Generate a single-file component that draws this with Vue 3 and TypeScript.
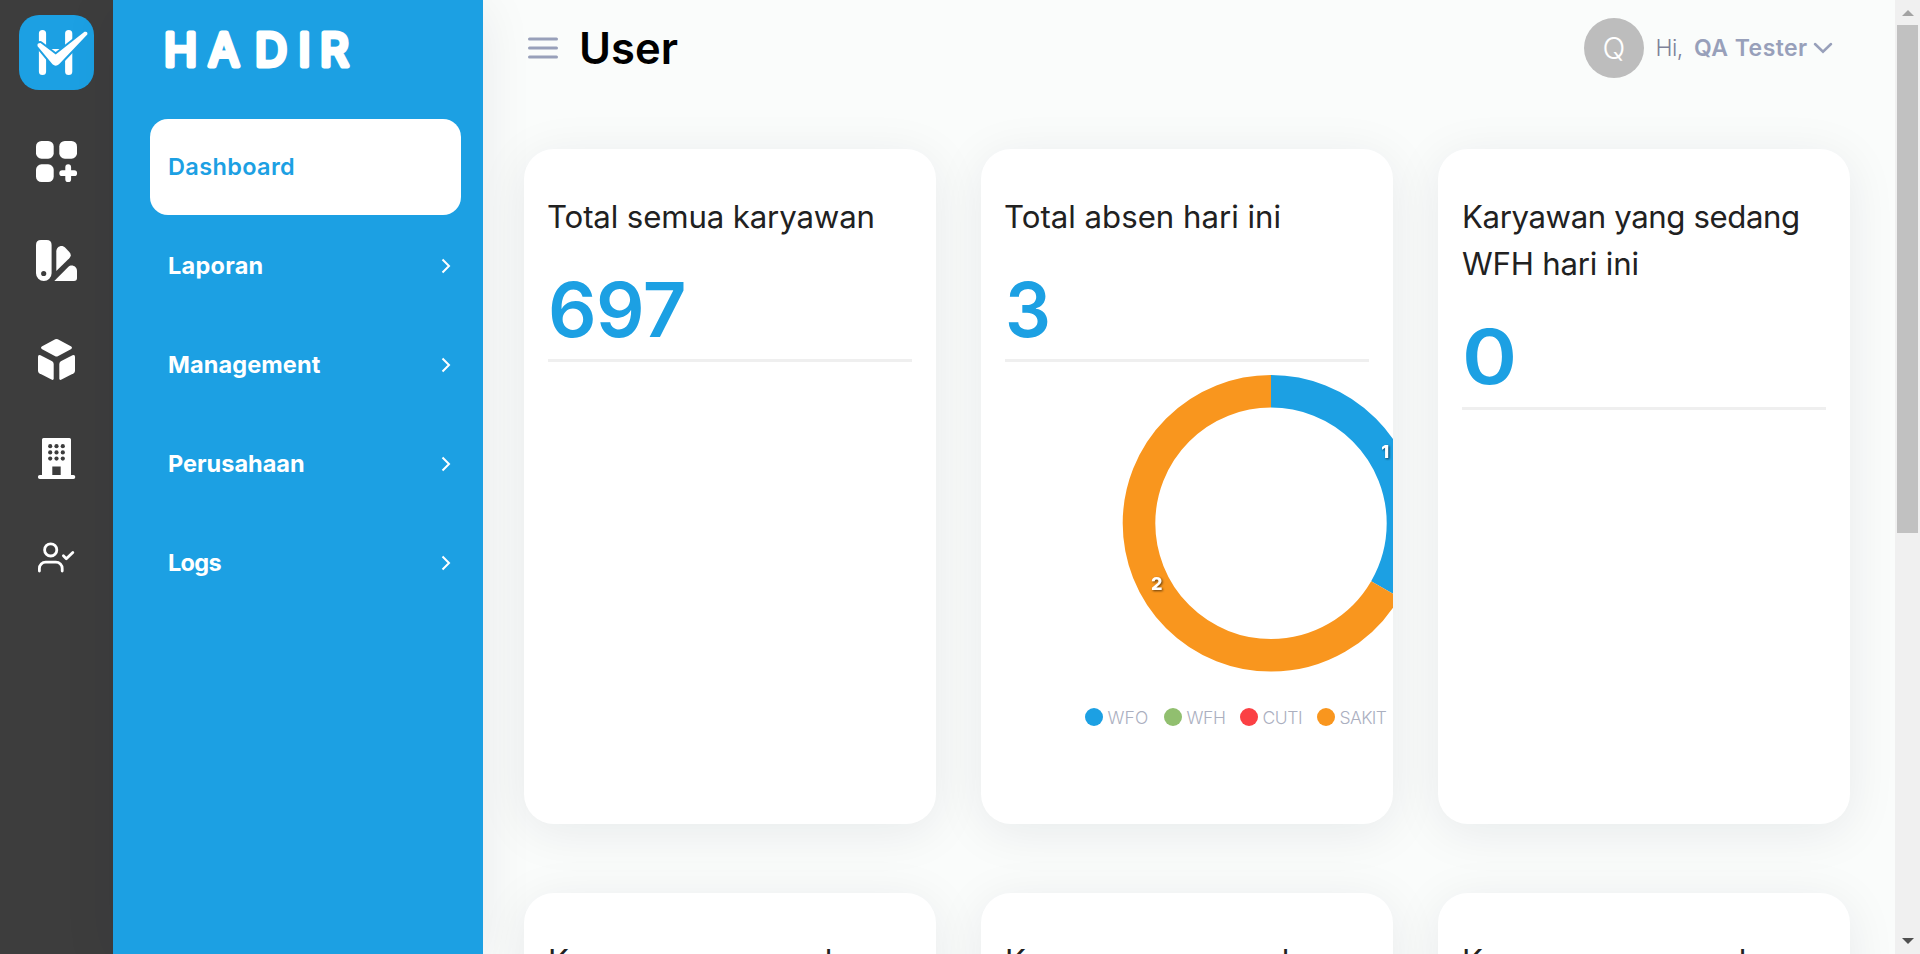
<script setup lang="ts">
interface MenuItem { label: string; active?: boolean }
interface Slice { label: string; color: string; value: number; width: number }
interface Card { lines: string[]; cls: string; value: string; chart?: boolean }

const menu: MenuItem[] = [
  { label: 'Dashboard', active: true },
  { label: 'Laporan' },
  { label: 'Management' },
  { label: 'Perusahaan' },
  { label: 'Logs' },
]

const slices: Slice[] = [
  { label: 'WFO', color: '#1ca0e3', value: 1, width: 79 },
  { label: 'WFH', color: '#91bf6f', value: 0, width: 76 },
  { label: 'CUTI', color: '#fb4044', value: 0, width: 77 },
  { label: 'SAKIT', color: '#f9961e', value: 2, width: 77 },
]

const cards: Card[] = [
  { lines: ['Total semua karyawan'], cls: 't1', value: '697' },
  { lines: ['Total absen hari ini'], cls: 't2', value: '3', chart: true },
  { lines: ['Karyawan yang sedang', 'WFH hari ini'], cls: 't3', value: '0' },
  { lines: ['Karyawan yang sedang'], cls: 't3', value: '0' },
  { lines: ['Karyawan yang sedang'], cls: 't3', value: '0' },
  { lines: ['Karyawan yang sedang'], cls: 't3', value: '0' },
]

const R = 132
const C = 2 * Math.PI * R
const total = slices.reduce((sum, s) => sum + s.value, 0)
let used = 0
const arcs = slices.filter(s => s.value > 0).map(s => {
  const len = (s.value / total) * C
  const mid = ((used + len / 2) / C) * 2 * Math.PI
  const arc = {
    color: s.color,
    value: s.value,
    dash: `${len} ${C - len}`,
    offset: -used,
    x: 150 + R * Math.sin(mid),
    y: 150 - R * Math.cos(mid),
  }
  used += len
  return arc
})
</script>

<template>
  <div class="app">
    <aside class="rail">
      <svg class="logo" viewBox="0 0 75 75">
        <rect width="75" height="75" rx="20" fill="#1ca0e3" />
        <path d="M23.5 18.600V56.500M49.700 18.600V56.500" stroke="#fff" stroke-width="7.200" stroke-linecap="round" />
        <path d="M27 34H46V40H27z" fill="#fff" />
        <path d="M18.600 31.200Q17.700 28 21.500 28L36.700 39.500 65.500 16.800Q69 16 68.300 19.500L40 49.300Q36.700 52 33.500 49.300Z" fill="#fff" stroke="#1ca0e3" stroke-width="4" paint-order="stroke" stroke-linejoin="round" />
      </svg>
      <nav class="rail-nav">
        <span class="slot">
          <svg class="icon" viewBox="0 0 41 41" fill="#fff">
            <rect width="17.700" height="17.700" rx="5.500" /><rect x="23.300" width="17.700" height="17.700" rx="5.500" /><rect y="23.300" width="17.700" height="17.700" rx="5.500" />
            <path d="M32.200 26.200V38.200M26.200 32.200H38.200" stroke="#fff" stroke-width="5.800" stroke-linecap="round" />
          </svg>
        </span>
        <span class="slot">
          <svg class="icon" viewBox="0 0 41 41" fill="#fff">
            <path fill-rule="evenodd" d="M5 0H10.700Q15.600 0 15.600 5V33.200A7.800 7.800 0 0 1 0 33.200V5Q0 0 5 0zM7.700 30.900a2.600 2.600 0 1 0 0 5.200a2.600 2.600 0 1 0 0-5.200z" />
            <path d="M20.300 31V11.500C20.300 6.500 26 4.300 29.300 7.700L33.300 12Q36.200 15.200 33.300 18.200Z" />
            <path d="M18.300 41L32.200 27C35.500 23.800 41 26.300 41 31V38Q41 41 38 41Z" />
          </svg>
        </span>
        <span class="slot">
          <svg class="icon" viewBox="0 0 41 41" fill="#fff">
            <path d="M19.200 .3Q20.500-.3 21.800 .3L35.300 7.600Q36.800 8.800 35.300 10L21.800 17.200Q20.500 17.900 19.200 17.200L5.700 10Q4.200 8.800 5.700 7.600Z" />
            <path d="M2 17.800Q2 15.200 4.500 16.200L16.200 22.300Q17.700 23.200 17.700 25V39.300Q17.700 41.700 15.500 40.600L3.300 34.200Q2 33.300 2 31.700Z" />
            <path d="M39 17.800Q39 15.200 36.500 16.200L24.800 22.300Q23.300 23.200 23.300 25V39.300Q23.300 41.700 25.500 40.600L37.700 34.200Q39 33.300 39 31.700Z" />
          </svg>
        </span>
        <span class="slot">
          <svg class="icon" viewBox="0 0 41 41">
            <path fill="#fff" fill-rule="evenodd" d="M7.500 0H33.500Q35 0 35 1.500V37H37.300A1.900 1.900 0 0 1 37.300 41H3.900A1.900 1.900 0 0 1 3.900 37H6V1.500Q6 0 7.500 0zM16.300 28.600V37H24.700V28.600z" />
            <g fill="#3d3d3d">
              <template v-for="y in [8.200, 14.400, 20.600]" :key="y">
                <circle v-for="x in [14.200, 20.500, 26.800]" :key="x" :cx="x" :cy="y" r="2.100" />
              </template>
            </g>
          </svg>
        </span>
        <span class="slot">
          <svg class="icon" viewBox="0 0 41 41" fill="none" stroke="#fff" stroke-width="2.800" stroke-linecap="round" stroke-linejoin="round">
            <circle cx="14.700" cy="12.900" r="6.100" />
            <path d="M3.400 34V31.500A6.300 6.300 0 0 1 9.700 25.100H19.900A6.300 6.300 0 0 1 26.200 31.500V34" />
            <path d="M27.400 18.800L30.300 21.700 36.800 15.500" />
          </svg>
        </span>
      </nav>
    </aside>

    <aside class="panel">
      <svg class="brand" viewBox="0 0 200 60">
        <text y="51.500" x="1 45.500 92 135.500 157">HADIR</text>
      </svg>
      <nav class="menu">
        <a v-for="m in menu" :key="m.label" :class="['item', m.label.toLowerCase(), { active: m.active }]">
          <span>{{ m.label }}</span>
          <svg v-if="!m.active" class="chev" viewBox="0 0 10 16"><path d="M1.500 1.500L8 8 1.500 14.500" fill="none" stroke="#fff" stroke-width="2" /></svg>
        </a>
      </nav>
    </aside>

    <main class="main">
      <header class="top">
        <svg class="burger" viewBox="0 0 30 24"><path d="M1.500 3H28.500M1.500 12H28.500M1.500 21H28.500" stroke="#98a0ba" stroke-width="3" stroke-linecap="round" /></svg>
        <h1>User</h1>
        <div class="user">
          <span class="avatar">Q</span>
          <span class="hi">Hi,</span>
          <b>QA Tester</b>
          <svg class="down" viewBox="0 0 20 12"><path d="M2 2L10 9.700 18 2" fill="none" stroke="#98a0ba" stroke-width="2.500" stroke-linecap="round" /></svg>
        </div>
      </header>
      <section class="grid">
        <article v-for="(c, i) in cards" :key="i" class="card">
          <h2 :class="c.cls"><span v-for="l in c.lines" :key="l" class="line">{{ l }}</span></h2>
          <div class="value" :class="{ low: c.lines.length > 1 }"><span :class="{ zero: c.value === '0', three: c.value === '3' }">{{ c.value }}</span></div>
          <hr />
          <div v-if="c.chart" class="chart">
            <svg class="donut" viewBox="0 0 300 300">
              <circle v-for="a in arcs" :key="a.color" cx="150" cy="150.300" :r="R" fill="none" :stroke="a.color" stroke-width="32.600" :stroke-dasharray="a.dash" :stroke-dashoffset="a.offset" transform="rotate(-90 150 150.300)" />
              <text v-for="a in arcs" :key="a.value" :x="a.x" :y="a.y + 0.500" class="num">{{ a.value }}</text>
            </svg>
            <ul class="legend">
              <li v-for="s in slices" :key="s.label" :class="s.label.toLowerCase()" :style="{ width: s.width + 'px' }">
                <i :style="{ background: s.color }"></i>{{ s.label }}
              </li>
            </ul>
          </div>
        </article>
      </section>
    </main>

    <div class="scroll">
      <svg class="arrow" viewBox="0 0 12 6"><path d="M0 6L6 0 12 6z" fill="#a3a3a3" /></svg>
      <div class="track"><div class="thumb"></div></div>
      <svg class="arrow" viewBox="0 0 12 6"><path d="M0 0H12L6 6z" fill="#505050" /></svg>
    </div>
  </div>
</template>

<style>
html, body { margin: 0; overflow: hidden; }
</style>

<style scoped>
.app {
  display: flex;
  width: 1920px;
  height: 954px;
  overflow: hidden;
  background: #fafcfb;
  font-family: Inter, "Open Sans", sans-serif;
  box-sizing: border-box;
}
.rail { width: 113px; flex: none; background: #3d3d3d; display: flex; flex-direction: column; align-items: center; padding-top: 15px; box-sizing: border-box; }
.logo { width: 75px; height: 75px; display: block; }
.rail-nav { margin-top: 22px; }
.slot { height: 99px; display: flex; align-items: center; }
.icon { width: 41px; height: 41px; display: block; overflow: visible; }

.panel { width: 370px; flex: none; background: #1ca0e3; box-sizing: border-box; padding-left: 37px; box-shadow: 0 8px 50px rgba(10, 30, 50, .08); }
.brand { display: block; width: 200px; height: 60px; margin: 14px 0 45px 13px; overflow: visible; }
.brand text { font-size: 44.500px; font-weight: 400; fill: #fff; stroke: #fff; stroke-width: 5px; stroke-linejoin: round; }
.menu { display: flex; flex-direction: column; gap: 3px; }
.item { width: 311px; height: 96px; border-radius: 18px; box-sizing: border-box; padding: 0 10px 0 18px; display: flex; align-items: center; justify-content: space-between; color: #fff; font-size: 23.500px; font-weight: 700; }
.item span { margin-top: -2px; }
.item.active { background: #fff; color: #1ca0e3; font-weight: 600; letter-spacing: .35px; }
.item.laporan { letter-spacing: .25px; }
.item.management { letter-spacing: .1px; }
.item.logs { letter-spacing: -.7px; }
.chev { width: 10px; height: 16px; }

.main { flex: 1; min-width: 0; padding-left: 41px; }
.top { display: flex; align-items: center; height: 96px; padding-left: 4px; margin-right: 62px; }
.burger { width: 30px; height: 24px; }
h1 { margin: -1px 0 0 21px; font-size: 43.500px; font-weight: 600; color: #000; line-height: 60px; }
.user { margin-left: auto; display: flex; align-items: center; color: #98a0ba; font-size: 24px; }
.avatar { width: 60px; height: 60px; border-radius: 50%; background: #bdbdbd; color: #fff; display: flex; align-items: center; justify-content: center; font-size: 30px; font-weight: 300; }
.hi { width: 38.500px; margin-left: 11.500px; font-weight: 300; color: #7e8299; font-size: 23px; letter-spacing: -.6px; }
.user b { font-weight: 600; font-size: 23px; width: 114px; white-space: nowrap; letter-spacing: .45px; }
.down { width: 20px; height: 12px; margin-left: 5px; }

.grid { margin-top: 53px; display: grid; grid-template-columns: repeat(3, 412px); gap: 69px 45px; grid-auto-rows: 675px; }
.card { background: #fff; border-radius: 30px; box-shadow: 0 8px 50px rgba(10, 30, 50, .08); overflow: hidden; box-sizing: border-box; padding: 45px 24px 0; }
h2 { margin: 0; font-size: 31.200px; line-height: 47px; font-weight: 400; color: #212121; white-space: nowrap; }
.t1 { letter-spacing: -.13px; text-indent: -1px; }
.t2 { letter-spacing: 0; text-indent: -1px; }
.t3 { letter-spacing: -.4px; }
.line { display: block; }
.line + .line { letter-spacing: -.2px; }
.value { height: 118px; line-height: 137px; font-size: 76px; font-weight: 600; color: #1ca0e3; letter-spacing: -.5px; }
.value.low { height: 119px; }
.value span { display: inline-block; transform-origin: left; }
.value .zero { transform: scaleX(1.100); }
.value .three { transform: scaleX(.95); }
hr { margin: 0; border: 0; height: 3px; background: #efefef; }
.chart { width: 532px; }
.donut { display: block; width: 300px; height: 300px; margin: 11px 0 0 116px; }
.num { font-size: 18px; font-weight: 800; fill: #fff; text-anchor: middle; filter: drop-shadow(1px 1px 1px rgba(0, 0, 0, .6)); }
.legend { list-style: none; margin: 35px 0 0 80px; padding: 0; display: flex; color: #abafbf; font-size: 17.500px; font-weight: 300; letter-spacing: -.4px; }
.legend li { display: flex; align-items: center; height: 18px; white-space: nowrap; flex: none; }
.legend .wfo { letter-spacing: .1px; }
.legend .sakit { letter-spacing: -.6px; }
.legend i { width: 18px; height: 18px; border-radius: 50%; margin-right: 4.500px; flex: none; }

.scroll { width: 25px; flex: none; background: #f0f0f0; display: flex; flex-direction: column; align-items: center; padding: 10px 0; box-sizing: border-box; }
.arrow { width: 12px; height: 6px; display: block; flex: none; }
.track { flex: 1; padding-top: 9px; }
.thumb { width: 21px; height: 508px; background: #c1c1c1; }
</style>
